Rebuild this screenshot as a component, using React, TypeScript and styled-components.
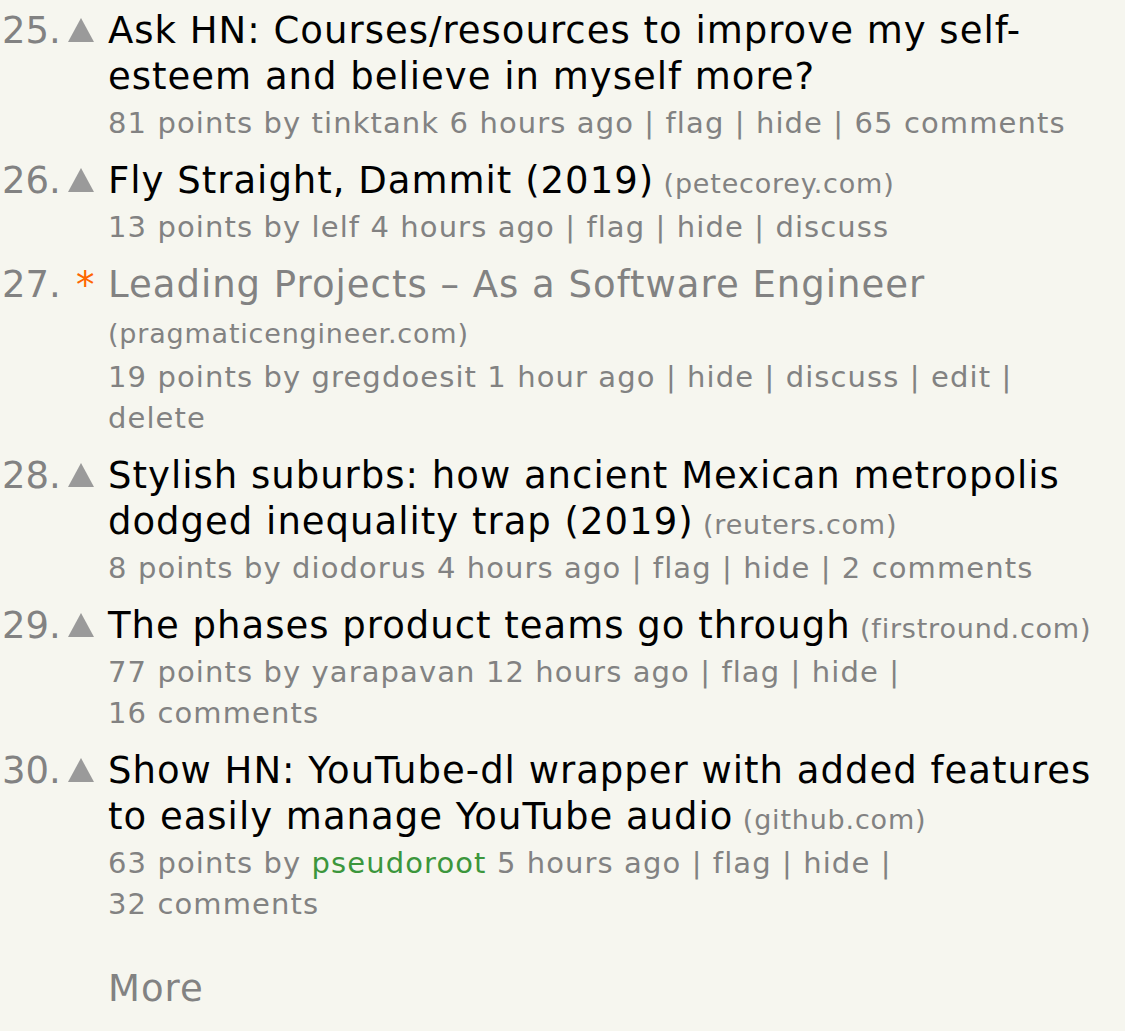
import React from "react";
import styled, { createGlobalStyle } from "styled-components";

const GlobalStyle = createGlobalStyle`
  html, body {
    margin: 0;
    padding: 0;
    background: #f6f6ef;
  }
  body {
    font-family: "DejaVu Sans", Verdana, sans-serif;
  }
`;

type Story = {
  rank: number;
  title: string;
  site?: string;
  points: number;
  user: string;
  newUser?: boolean;
  age: string;
  links: string[];
  own?: boolean;
};

const stories: Story[] = [
  {
    rank: 25,
    title: "Ask HN: Courses/resources to improve my self-esteem and believe in myself more?",
    points: 81,
    user: "tinktank",
    age: "6 hours ago",
    links: ["flag", "hide", "65\u00a0comments"],
  },
  {
    rank: 26,
    title: "Fly Straight, Dammit (2019)",
    site: "petecorey.com",
    points: 13,
    user: "lelf",
    age: "4 hours ago",
    links: ["flag", "hide", "discuss"],
  },
  {
    rank: 27,
    title: "Leading Projects – As a Software Engineer",
    site: "pragmaticengineer.com",
    points: 19,
    user: "gregdoesit",
    age: "1 hour ago",
    links: ["hide", "discuss", "edit", "delete"],
    own: true,
  },
  {
    rank: 28,
    title: "Stylish suburbs: how ancient Mexican metropolis dodged inequality trap (2019)",
    site: "reuters.com",
    points: 8,
    user: "diodorus",
    age: "4 hours ago",
    links: ["flag", "hide", "2\u00a0comments"],
  },
  {
    rank: 29,
    title: "The phases product teams go through",
    site: "firstround.com",
    points: 77,
    user: "yarapavan",
    age: "12 hours ago",
    links: ["flag", "hide", "16\u00a0comments"],
  },
  {
    rank: 30,
    title: "Show HN: YouTube-dl wrapper with added features to easily manage YouTube audio",
    site: "github.com",
    points: 63,
    user: "pseudoroot",
    newUser: true,
    age: "5 hours ago",
    links: ["flag", "hide", "32\u00a0comments"],
  },
];

const Page = styled.div`
  padding: 8px 25px 0 2px;
`;

const List = styled.div`
  display: flex;
  flex-direction: column;
  gap: 14px;
`;

const Item = styled.div`
  display: grid;
  grid-template-columns: 66px 40px 1fr;
`;

const Rank = styled.div`
  font-size: 37px;
  line-height: 46px;
  color: #828282;
  white-space: nowrap;
`;

const Vote = styled.div`
  padding-top: 10px;
`;

const Star = styled.div`
  font-size: 37px;
  line-height: 46px;
  color: #ff6600;
  margin-top: 1px;
  padding-left: 8px;
`;

const Body = styled.div`
  min-width: 0;
`;

const Title = styled.div<{ $own?: boolean }>`
  font-size: 37px;
  line-height: 46px;
  letter-spacing: 1px;
  color: ${(p) => (p.$own ? "#828282" : "#000000")};
`;

const Site = styled.span`
  font-size: 27px;
  line-height: 30px;
  letter-spacing: 0.8px;
  color: #828282;
`;

const Sub = styled.div`
  font-size: 29px;
  line-height: 41px;
  letter-spacing: 1.1px;
  color: #828282;
  margin-top: 3px;
`;

const User = styled.span<{ $new?: boolean }>`
  color: ${(p) => (p.$new ? "#3c963c" : "inherit")};
`;

const SubLink = styled.span`
  color: inherit;
`;

const More = styled.div`
  font-size: 37px;
  line-height: 46px;
  letter-spacing: 1px;
  color: #828282;
  margin: 41px 0 0 106px;
`;

const Triangle = () => (
  <svg width="26" height="24" viewBox="0 0 26 24" style={{ display: "block" }}>
    <polygon points="13,0 26,24 0,24" fill="#9a9a9a" />
  </svg>
);

export default function App() {
  return (
    <>
      <GlobalStyle />
      <Page>
        <List>
          {stories.map((s) => (
            <Item key={s.rank}>
              <Rank>{s.rank}.</Rank>
              {s.own ? (
                <Star>*</Star>
              ) : (
                <Vote>
                  <Triangle />
                </Vote>
              )}
              <Body>
                <Title $own={s.own}>
                  {s.title}
                  {s.site && <Site> ({s.site})</Site>}
                </Title>
                <Sub>
                  <SubLink>{s.points} points</SubLink> by{" "}
                  <User $new={s.newUser}>{s.user}</User>{" "}
                  <SubLink>{s.age}</SubLink>
                  {s.links.map((l) => (
                    <React.Fragment key={l}>
                      {" | "}
                      <SubLink>{l}</SubLink>
                    </React.Fragment>
                  ))}
                </Sub>
              </Body>
            </Item>
          ))}
        </List>
        <More>More</More>
      </Page>
    </>
  );
}
